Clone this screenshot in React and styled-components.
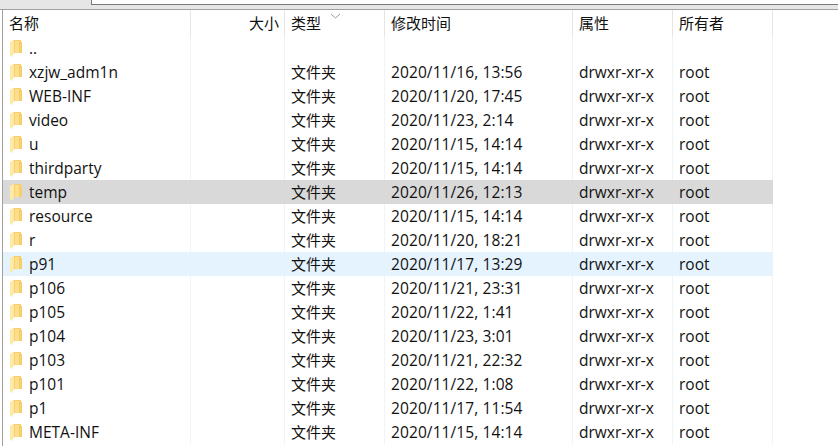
import React from 'react';
import styled, { createGlobalStyle } from 'styled-components';

const GlobalStyle = createGlobalStyle`
  html, body {
    margin: 0;
    padding: 0;
    background: #fff;
  }
  body {
    width: 838px;
    height: 446px;
    overflow: hidden;
    font-family: "Open Sans", "Noto Sans CJK SC", sans-serif;
    font-size: 15.5px;
    color: #111;
  }
`;

const COLS = '188px 94px 100px 188px 100px 100px';

const files = [
  ['..', '', '', '', ''],
  ['xzjw_adm1n', '文件夹', '2020/11/16, 13:56', 'drwxr-xr-x', 'root'],
  ['WEB-INF', '文件夹', '2020/11/20, 17:45', 'drwxr-xr-x', 'root'],
  ['video', '文件夹', '2020/11/23, 2:14', 'drwxr-xr-x', 'root'],
  ['u', '文件夹', '2020/11/15, 14:14', 'drwxr-xr-x', 'root'],
  ['thirdparty', '文件夹', '2020/11/15, 14:14', 'drwxr-xr-x', 'root'],
  ['temp', '文件夹', '2020/11/26, 12:13', 'drwxr-xr-x', 'root'],
  ['resource', '文件夹', '2020/11/15, 14:14', 'drwxr-xr-x', 'root'],
  ['r', '文件夹', '2020/11/20, 18:21', 'drwxr-xr-x', 'root'],
  ['p91', '文件夹', '2020/11/17, 13:29', 'drwxr-xr-x', 'root'],
  ['p106', '文件夹', '2020/11/21, 23:31', 'drwxr-xr-x', 'root'],
  ['p105', '文件夹', '2020/11/22, 1:41', 'drwxr-xr-x', 'root'],
  ['p104', '文件夹', '2020/11/23, 3:01', 'drwxr-xr-x', 'root'],
  ['p103', '文件夹', '2020/11/21, 22:32', 'drwxr-xr-x', 'root'],
  ['p101', '文件夹', '2020/11/22, 1:08', 'drwxr-xr-x', 'root'],
  ['p1', '文件夹', '2020/11/17, 11:54', 'drwxr-xr-x', 'root'],
  ['META-INF', '文件夹', '2020/11/15, 14:14', 'drwxr-xr-x', 'root'],
];

const Window = styled.div`
  width: 838px;
  height: 446px;
  display: flex;
  flex-direction: column;
  overflow: hidden;
`;

const TopStrip = styled.div`
  height: 9px;
  flex-shrink: 0;
  display: flex;
  background: #e6e6e6;
  border-bottom: 1px solid #a0a0a0;
`;

const TabEdge = styled.div`
  width: 91px;
  flex-shrink: 0;
`;

const TabBody = styled.div`
  flex: 1;
  height: 4px;
  background: #fff;
  border-left: 1px solid #7a7a7a;
  border-bottom: 1px solid #7a7a7a;
`;

const Pane = styled.div`
  flex: 1;
  margin-left: 2px;
  border-left: 1px solid #a0a0a0;
  overflow: hidden;
`;

const RowWrap = styled.div`
  width: 770px;
`;

const HeaderRow = styled.div`
  display: grid;
  grid-template-columns: ${COLS};
  height: 26px;
  position: relative;
`;

const HeaderCell = styled.div`
  border-right: 1px solid #e5e5e5;
  padding: 0 ${(p) => (p.$right ? '5px' : '6px')};
  font-size: 15px;
  line-height: 27px;
  white-space: nowrap;
  text-align: ${(p) => (p.$right ? 'right' : 'left')};
`;

const SortArrow = styled.svg`
  position: absolute;
  left: 327px;
  top: 3px;
`;

const Row = styled.div`
  display: grid;
  grid-template-columns: ${COLS};
  height: 24px;
  background: ${(p) => p.$bg || 'transparent'};
`;

const Cell = styled.div`
  border-right: 1px solid ${(p) => (p.$plain ? '#eef3fc' : 'transparent')};
  padding: 0 6px;
  line-height: 25px;
  white-space: nowrap;
  overflow: hidden;
`;

const NameCell = styled(Cell)`
  display: flex;
  align-items: center;
  gap: 7px;
  padding-left: 7px;
`;

const TypeCell = styled(Cell)`
  font-size: 15px;
`;

const TimeCell = styled(Cell)`
  letter-spacing: 0.1px;
`;

const FolderIcon = () => (
  <svg width="12" height="18" viewBox="0 0 12 18">
    <path d="M3 1 L11 1 L11 3 L12 3 L12 14 L3 14 Z" fill="#f7cf68" />
    <path d="M5 2 L9 2 L9 14 L5 14 Z" fill="#fbdf8f" />
    <path d="M0 3 L4 1 L4 15 L1 18 L0 17 Z" fill="#fde9a8" />
  </svg>
);

export default function App() {
  return (
    <Window>
      <GlobalStyle />
      <TopStrip>
        <TabEdge />
        <TabBody />
      </TopStrip>
      <Pane>
        <RowWrap>
          <HeaderRow>
            <HeaderCell>名称</HeaderCell>
            <HeaderCell $right>大小</HeaderCell>
            <HeaderCell>类型</HeaderCell>
            <HeaderCell>修改时间</HeaderCell>
            <HeaderCell>属性</HeaderCell>
            <HeaderCell>所有者</HeaderCell>
            <SortArrow width="11" height="6" viewBox="0 0 11 6">
              <path d="M1 1 L5.5 5 L10 1" fill="none" stroke="#9a9a9a" />
            </SortArrow>
          </HeaderRow>
          {files.map(([name, type, time, attr, owner]) => {
            const selected = name === 'temp';
            const hover = name === 'p91';
            const plain = !selected && !hover;
            return (
              <Row key={name} $bg={selected ? '#d9d9d9' : hover ? '#e5f3ff' : ''}>
                <NameCell $plain={plain}>
                  <FolderIcon />
                  <span>{name}</span>
                </NameCell>
                <Cell $plain={plain} />
                <TypeCell $plain={plain}>{type}</TypeCell>
                <TimeCell $plain={plain}>{time}</TimeCell>
                <Cell $plain={plain}>{attr}</Cell>
                <Cell $plain={plain}>{owner}</Cell>
              </Row>
            );
          })}
        </RowWrap>
      </Pane>
    </Window>
  );
}
